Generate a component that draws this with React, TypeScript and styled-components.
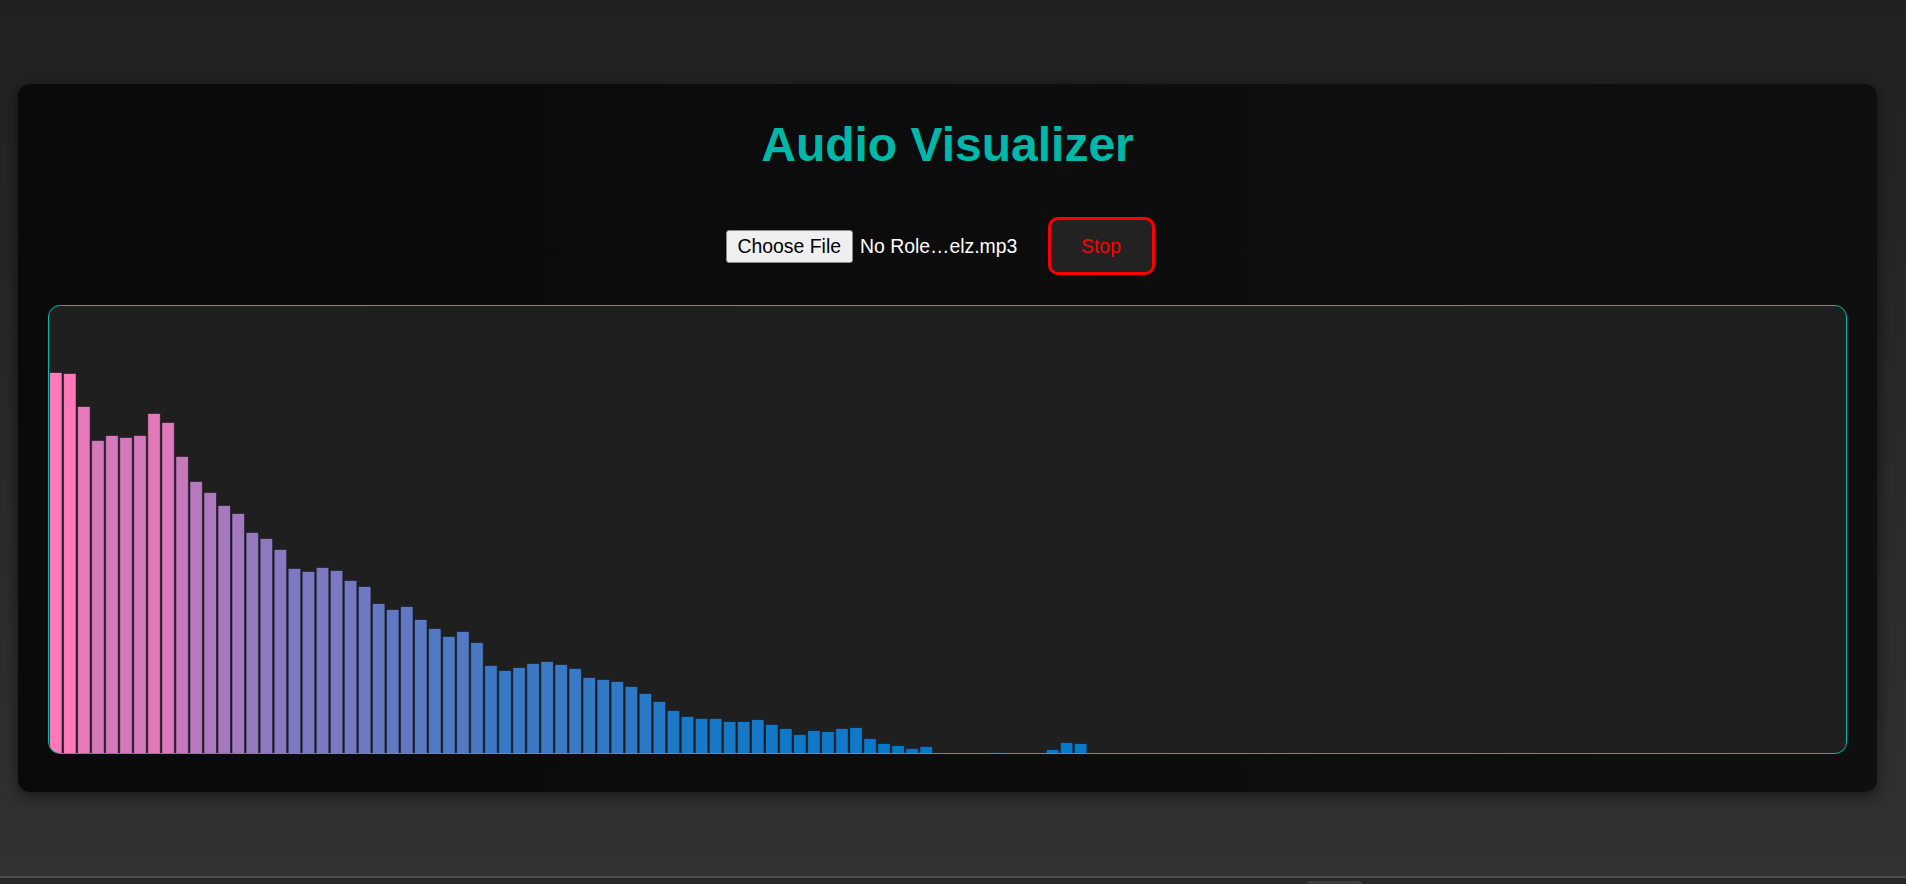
import React from "react";
import styled, { createGlobalStyle } from "styled-components";

// bar heights in px, read off the frozen frame (128 bins)
const LEVELS = [
  381, 380, 347, 313, 318, 316, 318, 340, 331, 297, 272, 261, 248, 240, 221, 215,
  204, 185, 182, 186, 183, 173, 167, 150, 144, 147, 134, 125, 117, 122, 111, 88,
  83, 86, 90, 92, 89, 85, 76, 74, 72, 67, 60, 52, 43, 37, 35, 35,
  32, 32, 34, 29, 25, 19, 23, 22, 25, 26, 15, 10, 8, 5, 7, 0,
  0, 0, 0, 1, 0, 0, 0, 4, 11, 10,
];
const BINS = 128;
const VIEW_W = 1796;
const VIEW_H = 447;

const GlobalStyle = createGlobalStyle`
  html, body {
    margin: 0;
    padding: 0;
    background: #222;
    overflow: hidden;
  }
  body {
    font-family: "Liberation Sans", Arial, sans-serif;
  }
`;

const Page = styled.div`
  min-height: 876px;
  box-sizing: border-box;
  padding: 84px 29px 0 18px;
  background: linear-gradient(180deg, #212121 0%, #323232 100%);
`;

const Card = styled.main`
  display: flex;
  flex-direction: column;
  align-items: center;
  padding: 33px 30px 38px;
  border-radius: 12px;
  background: linear-gradient(90deg, #0a0a0a 0%, #0f0f0f 100%);
  box-shadow: 0 4px 16px rgba(0, 0, 0, 0.55);
`;

const Title = styled.h1`
  margin: 0;
  font-size: 48px;
  line-height: 55px;
  font-weight: 700;
  color: #00b8a9;
`;

const Controls = styled.div`
  display: flex;
  align-items: center;
  justify-content: center;
  margin-top: 45px;
  height: 58px;
`;

const FileInput = styled.label`
  display: flex;
  align-items: center;
  width: 307px;
  gap: 7px;
  font-size: 19.4px;
  color: #fff;
  white-space: nowrap;
`;

const ChooseButton = styled.span`
  display: flex;
  align-items: center;
  height: 33px;
  box-sizing: border-box;
  padding: 0 11px;
  border: 1px solid #8a8a8a;
  border-radius: 3px;
  background: #efefef;
  color: #000;
`;

const StopButton = styled.button`
  margin: 0 15px;
  box-sizing: border-box;
  width: 107px;
  height: 58px;
  padding: 0;
  border: 3px solid #ff0000;
  border-radius: 10px;
  background: #222;
  color: #ff0000;
  font-family: "Liberation Sans", Arial, sans-serif;
  font-size: 19.4px;
  cursor: pointer;
`;

const Scope = styled.div`
  margin-top: 30px;
  width: 100%;
  height: 449px;
  box-sizing: border-box;
  border: 1px solid #00bcad;
  border-radius: 12px;
  background: #1f1f1f;
  overflow: hidden;

  svg {
    display: block;
    width: 100%;
    height: 100%;
  }
`;

const BottomBar = styled.div`
  display: flex;
  align-items: flex-end;
  height: 8px;
  box-sizing: border-box;
  padding-left: 1307px;
  border-top: 2px solid #4b4b4b;
  background: #272727;
`;

const Thumb = styled.div`
  width: 55px;
  height: 3px;
  border-radius: 3px 3px 0 0;
  background: #3c3c3c;
`;

function barColor(h: number) {
  const r = Math.min(255, Math.round(h * 0.67));
  const b = Math.round(200 - r * 0.06);
  return `rgb(${r}, 121, ${b})`;
}

function Bars() {
  const pitch = VIEW_W / BINS;
  return (
    <svg viewBox={`0 0 ${VIEW_W} ${VIEW_H}`} preserveAspectRatio="none">
      {LEVELS.map((h, i) =>
        h > 0 ? (
          <rect
            key={i}
            x={i * pitch + 0.5}
            y={VIEW_H - h + 0.5}
            width={pitch - 1.5}
            height={h}
            fill={barColor(h)}
            stroke="rgba(18, 18, 26, 0.55)"
            strokeWidth={1}
          />
        ) : null
      )}
    </svg>
  );
}

export default function App() {
  return (
    <>
      <GlobalStyle />
      <Page>
        <Card>
          <Title>Audio Visualizer</Title>
          <Controls>
            <FileInput>
              <ChooseButton>Choose File</ChooseButton>
              <span>No Role…elz.mp3</span>
            </FileInput>
            <StopButton>Stop</StopButton>
          </Controls>
          <Scope>
            <Bars />
          </Scope>
        </Card>
      </Page>
      <BottomBar>
        <Thumb />
      </BottomBar>
    </>
  );
}
